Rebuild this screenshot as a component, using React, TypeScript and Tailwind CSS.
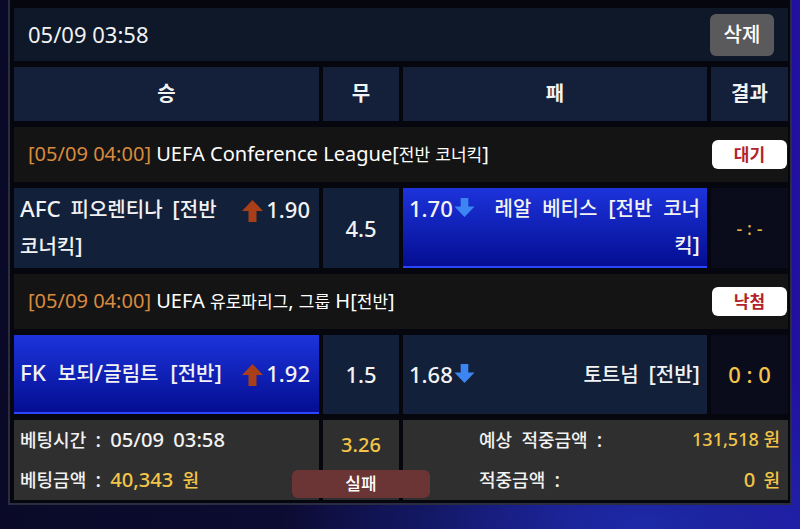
import React from 'react'

// hangul in the source font runs narrower than its latin, so latin runs get a bump
const Mix = ({ text, latin = 'text-[1.12em]' }: { text: string; latin?: string }) => (
  <>
    {text.split(/([\uAC00-\uD7A3]+)/).map((s, i) =>
      s === '' ? null : /[\uAC00-\uD7A3]/.test(s) ? (
        <React.Fragment key={i}>{s}</React.Fragment>
      ) : (
        <span key={i} className={latin}>
          {s}
        </span>
      )
    )}
  </>
)

const UpArrow = () => (
  <svg viewBox="0 0 22 24" className="mt-[4px] h-[24px] w-[23px] shrink-0">
    <polygon points="11,1 21.5,12 15,12 15,23 7,23 7,12 0.5,12" fill="#a83f18" />
  </svg>
)

const DownArrow = () => (
  <svg viewBox="0 0 22 22" className="mb-[2px] h-[21px] w-[23px] shrink-0">
    <polygon points="7,1 15,1 15,10 21.5,10 11,21 0.5,10 7,10" fill="#3b86f2" />
  </svg>
)

const blue = 'bg-gradient-to-b from-[#1d33dc] to-[#050d92] border-b-2 border-[#2a46ff]'
const navy = 'bg-[#12203a]'

interface HeaderProps {
  time: string
  title: string
  status: string
}

const MatchHeader = ({ time, title, status }: HeaderProps) => (
  <div className="flex h-[55px] items-center justify-between bg-[#141414] pl-[14px] pr-[1px] text-[17px]">
    <div>
      <span className="text-[1.18em] text-[#d98b3d]">[{time}] </span>
      <span className="text-white">
        <Mix text={title} latin="text-[1.18em]" />
      </span>
    </div>
    <div className="flex h-[29px] w-[75px] items-center justify-center rounded-[6px] bg-white text-[17px] font-bold text-[#b3222a]">
      {status}
    </div>
  </div>
)

export default function App() {
  return (
    <div className="h-[529px] w-[800px] overflow-hidden bg-[radial-gradient(ellipse_45%_30%_at_80%_100%,#1d2aa8_0%,transparent_100%),linear-gradient(90deg,#0a0a28_0%,#0d0c38_55%,#2211a2_100%)] font-['Noto_Sans','Noto_Sans_CJK_KR',sans-serif] text-[#f2f2f2]">
      <div className="ml-[8px] flex w-[784px] flex-col gap-[6px] border-x-2 border-b-2 border-[#2a2c40] bg-[#05060e] pb-[3px] pl-[4px] pr-[2px] pt-[8px]">
        {/* top bar */}
        <div className="flex h-[53px] items-center justify-between bg-[#0e1828] pl-[14px] pr-[14px]">
          <span className="text-[22px]">05/09 03:58</span>
          <button className="flex h-[42px] w-[64px] items-center justify-center rounded-[6px] bg-[#5a5a5c] text-[20px] font-medium text-white">
            삭제
          </button>
        </div>

        {/* column headers */}
        <div className="grid h-[54px] grid-cols-[305px_76px_304px_1fr] gap-x-[4px] text-[20px] font-bold">
          <div className="flex items-center justify-center bg-[#14203a]">승</div>
          <div className="flex items-center justify-center bg-[#14203a]">무</div>
          <div className="flex items-center justify-center bg-[#14203a]">패</div>
          <div className="flex items-center justify-center bg-[#14203a]">결과</div>
        </div>

        <MatchHeader time="05/09 04:00" title="UEFA Conference League[전반 코너킥]" status="대기" />

        <div className="grid h-[80px] grid-cols-[305px_76px_304px_1fr] gap-x-[4px] text-[20px] font-medium">
          <div className={`flex items-center pl-[6px] pr-[9px] ${navy}`}>
            <div className="w-full break-keep leading-[36px] [word-spacing:4px]">
              <span className="float-right ml-[4px] flex h-[36px] items-center gap-[2px] text-[22px]">
                <UpArrow />
                1.90
              </span>
              <Mix text="AFC 피오렌티나 [전반 코너킥]" />
            </div>
          </div>
          <div className={`flex items-center justify-center text-[22px] ${navy}`}>4.5</div>
          <div className={`flex items-center pl-[6px] pr-[7px] ${blue}`}>
            <div className="w-full text-right leading-[36px] [word-spacing:5px]">
              <span className="float-left mr-[10px] flex h-[36px] items-center text-[22px]">
                1.70
                <DownArrow />
              </span>
              <Mix text="레알 베티스 [전반 코너킥]" />
            </div>
          </div>
          <div className="flex items-center justify-center bg-[#0a0c1c] text-[18px] text-[#dcb245]">- : -</div>
        </div>

        <MatchHeader time="05/09 04:00" title="UEFA 유로파리그, 그룹 H[전반]" status="낙첨" />

        <div className="grid h-[79px] grid-cols-[305px_76px_304px_1fr] gap-x-[4px] text-[20px] font-medium">
          <div className={`flex items-center pl-[6px] pr-[9px] ${blue}`}>
            <div className="w-full leading-[36px] [word-spacing:6px]">
              <span className="float-right ml-[4px] flex h-[36px] items-center gap-[2px] text-[22px]">
                <UpArrow />
                1.92
              </span>
              <Mix text="FK 보되/글림트 [전반]" />
            </div>
          </div>
          <div className={`flex items-center justify-center text-[22px] ${navy}`}>1.5</div>
          <div className={`flex items-center pl-[6px] pr-[7px] ${navy}`}>
            <div className="w-full text-right leading-[36px] [word-spacing:4px]">
              <span className="float-left mr-[10px] flex h-[36px] items-center text-[22px]">
                1.68
                <DownArrow />
              </span>
              <Mix text="토트넘 [전반]" />
            </div>
          </div>
          <div className="flex items-center justify-center bg-[#0a0c1c] text-[22px] text-[#f2c548]">0 : 0</div>
        </div>

        {/* bet summary */}
        <div className="grid h-[80px] grid-cols-[305px_76px_1fr] gap-x-[4px] text-[18px] font-medium">
          <div className="flex flex-col justify-center bg-[#2f2f2f] pl-[6px] leading-[39px] [word-spacing:4px]">
            <div>
              <Mix text="베팅시간 : 05/09 03:58" latin="text-[1.12em]" />
            </div>
            <div>
              <Mix text="베팅금액 : " latin="text-[1.12em]" />
              <span className="text-[#f2c548]">
                <Mix text="40,343 원" latin="text-[1.12em]" />
              </span>
            </div>
          </div>
          <div className="relative flex justify-center bg-[#2f2f2f] pt-[10px] text-[20px] leading-[30px] text-[#f2c548]">
            3.26
            <div className="absolute bottom-[2px] left-1/2 flex h-[28px] w-[138px] -translate-x-1/2 items-center justify-center rounded-[6px] bg-[#6b3535] text-[17px] text-white">
              실패
            </div>
          </div>
          <div className="flex flex-col justify-center bg-[#2f2f2f] pl-[76px] pr-[8px] leading-[39px]">
            <div className="flex justify-between">
              <span className="[word-spacing:4px]">
                <Mix text="예상 적중금액 :" latin="text-[1.12em]" />
              </span>
              <span className="text-[#f2c548]">
                <Mix text="131,518 원" latin="text-[1em]" />
              </span>
            </div>
            <div className="flex justify-between">
              <span className="[word-spacing:4px]">
                <Mix text="적중금액 :" latin="text-[1.12em]" />
              </span>
              <span className="text-[#f2c548] [word-spacing:3px]">
                <Mix text="0 원" latin="text-[1.12em]" />
              </span>
            </div>
          </div>
        </div>
      </div>
    </div>
  )
}
